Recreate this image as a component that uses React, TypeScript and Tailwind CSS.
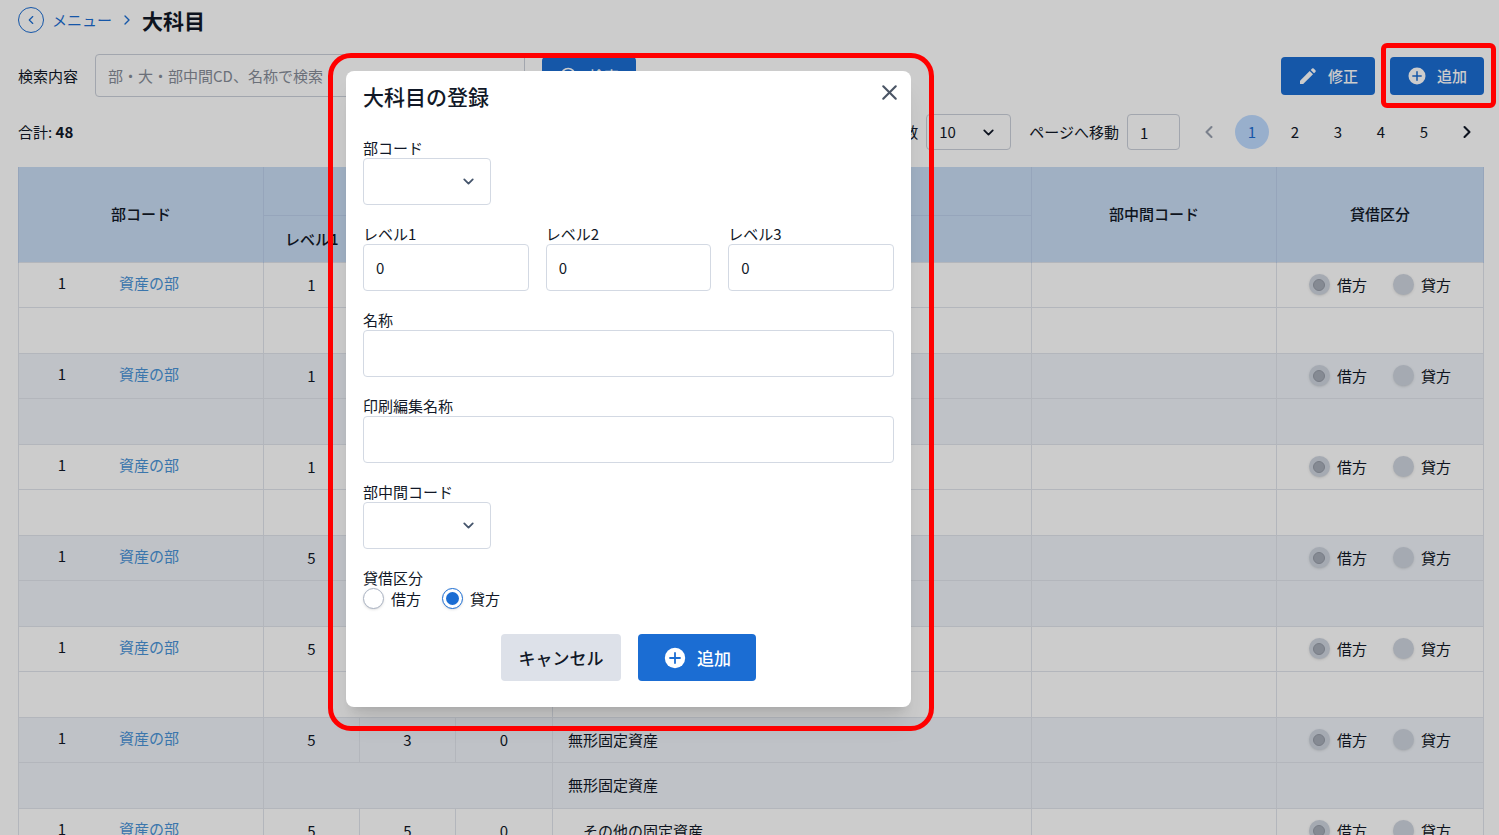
import { ChevronDown, ChevronLeft, ChevronRight, Search, X } from "lucide-react"
import React, { useState } from "react"

const accounts = [
    { code: 1, part: "資産の部", levels: ["1", "", ""], name: "", printName: "", indent: false },
    { code: 1, part: "資産の部", levels: ["1", "", ""], name: "", printName: "", indent: false },
    { code: 1, part: "資産の部", levels: ["1", "", ""], name: "", printName: "", indent: false },
    { code: 1, part: "資産の部", levels: ["5", "", ""], name: "", printName: "", indent: false },
    { code: 1, part: "資産の部", levels: ["5", "", ""], name: "", printName: "", indent: false },
    { code: 1, part: "資産の部", levels: ["5", "3", "0"], name: "無形固定資産", printName: "無形固定資産", indent: false },
    { code: 1, part: "資産の部", levels: ["5", "5", "0"], name: "その他の固定資産", printName: "その他の固定資産", indent: true },
]

const pages = [1, 2, 3, 4, 5]

const PlusIcon = ({ size }: { size: number }) => (
    <svg width={size} height={size} viewBox="0 0 24 24" fill="none">
        <circle cx="12" cy="12" r="10.2" fill="currentColor" />
        <path d="M12 7v10M7 12h10" stroke="#1b6dd3" strokeWidth="1.8" strokeLinecap="round" />
    </svg>
)

const PencilIcon = () => (
    <svg width="20" height="20" viewBox="-1 -1 20 20" fill="currentColor">
        <path d="M1 17v-3.2L10.7 4l3.3 3.3L4.2 17H1z" />
        <path d="M11.7 3l1.4-1.4a1.1 1.1 0 0 1 1.6 0l1.7 1.7a1.1 1.1 0 0 1 0 1.6L15 6.3 11.7 3z" />
    </svg>
)

const ActionButton = ({ icon, children }: { icon: React.ReactNode; children: React.ReactNode }) => (
    <button
        type="button"
        className="flex h-[38px] w-[94px] items-center justify-center gap-2.5 rounded bg-[#1b6dd3] font-medium text-white"
    >
        {icon}
        <span>{children}</span>
    </button>
)

const RowRadio = ({ name, label, checked }: { name: string; label: string; checked: boolean }) => (
    <label className="flex items-center gap-[7px]">
        <input
            type="radio"
            name={name}
            defaultChecked={checked}
            disabled
            className="grid size-[21px] appearance-none place-content-center rounded-full bg-[#cfd5df] shadow-sm checked:before:size-3 checked:before:rounded-full checked:before:border checked:before:border-[#969ca8] checked:before:bg-[#a7adb8] checked:before:content-['']"
        />
        {label}
    </label>
)

const Field = ({ id, label, children }: { id: string; label: string; children: React.ReactNode }) => (
    <div className="flex flex-col">
        <label htmlFor={id} className="h-5 leading-5">{label}</label>
        {children}
    </div>
)

const CodeSelect = ({ id }: { id: string }) => (
    <div className="relative w-32">
        <select id={id} className="h-[47px] w-full appearance-none rounded border border-[#d3d9e3] bg-white px-3">
            <option value=""></option>
        </select>
        <ChevronDown
            size={17}
            strokeWidth={2.5}
            className="pointer-events-none absolute right-3.5 top-[15px] text-slate-600"
        />
    </div>
)

const inputClass = "h-[47px] w-full rounded border border-[#d3d9e3] bg-white px-3"

const RegisterModal = () => {
    const [side, setSide] = useState("貸方")

    return (
        <div
            role="dialog"
            aria-labelledby="modal-title"
            className="absolute left-[346px] top-[71px] z-20 w-[565px] rounded-lg bg-white px-[17px] pb-[26px] pt-[9px] shadow-xl"
        >
            <div className="flex items-start justify-between">
                <h2 id="modal-title" className="text-[21px] font-medium leading-8">大科目の登録</h2>
                <button type="button" aria-label="閉じる" className="-mr-2 text-gray-600">
                    <X size={25} strokeWidth={2} />
                </button>
            </div>

            <form className="mt-[26px] flex flex-col gap-[19px]">
                <Field id="part-code" label="部コード">
                    <CodeSelect id="part-code" />
                </Field>
                <div className="grid grid-cols-3 gap-[17px]">
                    <Field id="level1" label="レベル1">
                        <input id="level1" defaultValue="0" className={inputClass} />
                    </Field>
                    <Field id="level2" label="レベル2">
                        <input id="level2" defaultValue="0" className={inputClass} />
                    </Field>
                    <Field id="level3" label="レベル3">
                        <input id="level3" defaultValue="0" className={inputClass} />
                    </Field>
                </div>
                <Field id="name" label="名称">
                    <input id="name" className={inputClass} />
                </Field>
                <Field id="print-name" label="印刷編集名称">
                    <input id="print-name" className={inputClass} />
                </Field>
                <Field id="middle-code" label="部中間コード">
                    <CodeSelect id="middle-code" />
                </Field>
                <fieldset>
                    <legend className="h-5 leading-5">貸借区分</legend>
                    <div className="flex gap-[21px]">
                        {["借方", "貸方"].map((item) => (
                            <label key={item} className="flex items-center gap-[7px] leading-5">
                                <input
                                    type="radio"
                                    name="side"
                                    checked={side === item}
                                    onChange={() => setSide(item)}
                                    className="grid size-[21px] appearance-none place-content-center rounded-full border border-[#a9b2c2] bg-white shadow-sm checked:border-[#1b6dd3] checked:before:size-[13px] checked:before:rounded-full checked:before:bg-[#1b6dd3] checked:before:content-['']"
                                />
                                {item}
                            </label>
                        ))}
                    </div>
                </fieldset>
            </form>

            <div className="mt-[25px] flex justify-center gap-[17px] text-[17px] font-medium">
                <button type="button" className="h-[47px] w-[120px] rounded bg-[#dde1e9]">キャンセル</button>
                <button
                    type="button"
                    className="flex h-[47px] w-[118px] items-center justify-center gap-2.5 rounded bg-[#1b6dd3] text-white"
                >
                    <PlusIcon size={24} />
                    <span>追加</span>
                </button>
            </div>

            <div className="pointer-events-none absolute -bottom-6 -left-[18px] -right-[23px] -top-[18px] rounded-[23px] border-5 border-[#ff0000]" />
        </div>
    )
}

const App = () => {
    return (
        <div className="relative h-screen overflow-hidden bg-white font-['Noto_Sans_CJK_JP',sans-serif] text-[15px] leading-6 text-[#111827]">
            <div className="pl-[18px] pr-[15px]">
                <nav className="flex h-10 items-center">
                    <a
                        href="#"
                        aria-label="戻る"
                        className="flex size-[26px] items-center justify-center rounded-full border border-[#1b6dd3] text-[#1b6dd3]"
                    >
                        <ChevronLeft size={14} />
                    </a>
                    <a href="#" className="ml-2 text-[#1b6dd3]">メニュー</a>
                    <ChevronRight size={16} className="ml-[7px] text-[#1b6dd3]" />
                    <h1 className="ml-[7px] text-[21px] font-bold">大科目</h1>
                </nav>

                <div className="mt-3.5 flex items-center">
                    <label htmlFor="search">検索内容</label>
                    <input
                        id="search"
                        placeholder="部・大・部中間CD、名称で検索"
                        className="ml-[17px] h-[43px] w-[430px] rounded border border-[#cbd0da] px-3 placeholder:text-[#868c98]"
                    />
                    <div className="ml-[17px]">
                        <ActionButton icon={<Search size={20} />}>検索</ActionButton>
                    </div>
                    <div className="ml-auto flex gap-[15px]">
                        <ActionButton icon={<PencilIcon />}>修正</ActionButton>
                        <div className="relative">
                            <ActionButton icon={<PlusIcon size={20} />}>追加</ActionButton>
                            <div className="pointer-events-none absolute -bottom-[13px] -left-[9px] -right-3 -top-3.5 z-30 rounded-md border-5 border-[#ff0000]" />
                        </div>
                    </div>
                </div>

                <div className="mt-[17px] flex items-center justify-between">
                    <p>合計: <span className="font-bold">48</span></p>
                    <div className="flex items-center">
                        <label htmlFor="per-page" className="mr-2">表示件数</label>
                        <div className="relative mr-[18px]">
                            <select
                                id="per-page"
                                className="h-9 w-[85px] appearance-none rounded border border-[#cbd0da] px-3"
                            >
                                <option>10</option>
                            </select>
                            <ChevronDown
                                size={17}
                                strokeWidth={2.5}
                                className="pointer-events-none absolute right-3.5 top-2.5"
                            />
                        </div>
                        <label htmlFor="go-page" className="mr-2">ページへ移動</label>
                        <input id="go-page" defaultValue="1" className="h-9 w-[53px] rounded border border-[#cbd0da] px-3" />
                        <div className="ml-3 flex gap-[9px]">
                            <button type="button" aria-label="前へ" className="flex size-[34px] items-center justify-center text-gray-400">
                                <ChevronLeft size={20} strokeWidth={2.5} />
                            </button>
                            {pages.map((page) => (
                                <button
                                    key={page}
                                    type="button"
                                    className={`size-[34px] rounded-full ${page === 1 ? "bg-[#bfdbff] text-[#1b6dd3]" : ""}`}
                                >
                                    {page}
                                </button>
                            ))}
                            <button type="button" aria-label="次へ" className="flex size-[34px] items-center justify-center">
                                <ChevronRight size={20} strokeWidth={2.5} />
                            </button>
                        </div>
                    </div>
                </div>

                <table className="mt-[17px] w-full table-fixed border-collapse">
                    <colgroup>
                        <col className="w-[245px]" />
                        <col className="w-24" />
                        <col className="w-24" />
                        <col className="w-[97px]" />
                        <col />
                        <col className="w-[245px]" />
                        <col className="w-[207px]" />
                    </colgroup>
                    <thead className="bg-[#c9dcf4]">
                        <tr className="h-12 *:border-x *:border-[#bccfea] *:font-medium">
                            <th rowSpan={2}>部コード</th>
                            <th colSpan={3} className="border-b"></th>
                            <th className="border-b"></th>
                            <th rowSpan={2}>部中間コード</th>
                            <th rowSpan={2}>貸借区分</th>
                        </tr>
                        <tr className="h-[47px] *:font-medium">
                            <th>レベル1</th>
                            <th>レベル2</th>
                            <th>レベル3</th>
                            <th className="border-x border-[#bccfea]"></th>
                        </tr>
                    </thead>
                    <tbody>
                        {accounts.map((row, idx) => (
                            <React.Fragment key={idx}>
                                <tr className={`h-[45px] *:border *:border-[#e0e4ec] ${idx % 2 ? "bg-[#eff3f9]" : ""}`}>
                                    <td>
                                        <div className="flex pb-1">
                                            <span className="w-[86px] text-center">{row.code}</span>
                                            <a href="#" className="ml-3.5 text-[#4a94d8]">{row.part}</a>
                                        </div>
                                    </td>
                                    {row.levels.map((level, i) => (
                                        <td key={i} className="text-center">{level}</td>
                                    ))}
                                    <td className={row.indent ? "pl-[30px]" : "pl-[15px]"}>{row.name}</td>
                                    <td></td>
                                    <td>
                                        <div className="flex justify-center gap-[26px]">
                                            <RowRadio name={`side-${idx}`} label="借方" checked />
                                            <RowRadio name={`side-${idx}`} label="貸方" checked={false} />
                                        </div>
                                    </td>
                                </tr>
                                <tr className={`h-[46px] *:border *:border-[#e0e4ec] ${idx % 2 ? "bg-[#eff3f9]" : ""}`}>
                                    <td></td>
                                    <td colSpan={3}></td>
                                    <td className={row.indent ? "pl-[30px]" : "pl-[15px]"}>{row.printName}</td>
                                    <td></td>
                                    <td></td>
                                </tr>
                            </React.Fragment>
                        ))}
                    </tbody>
                </table>
            </div>

            <div className="absolute inset-0 z-10 bg-black/20" />
            <RegisterModal />
        </div>
    )
}

export default App
